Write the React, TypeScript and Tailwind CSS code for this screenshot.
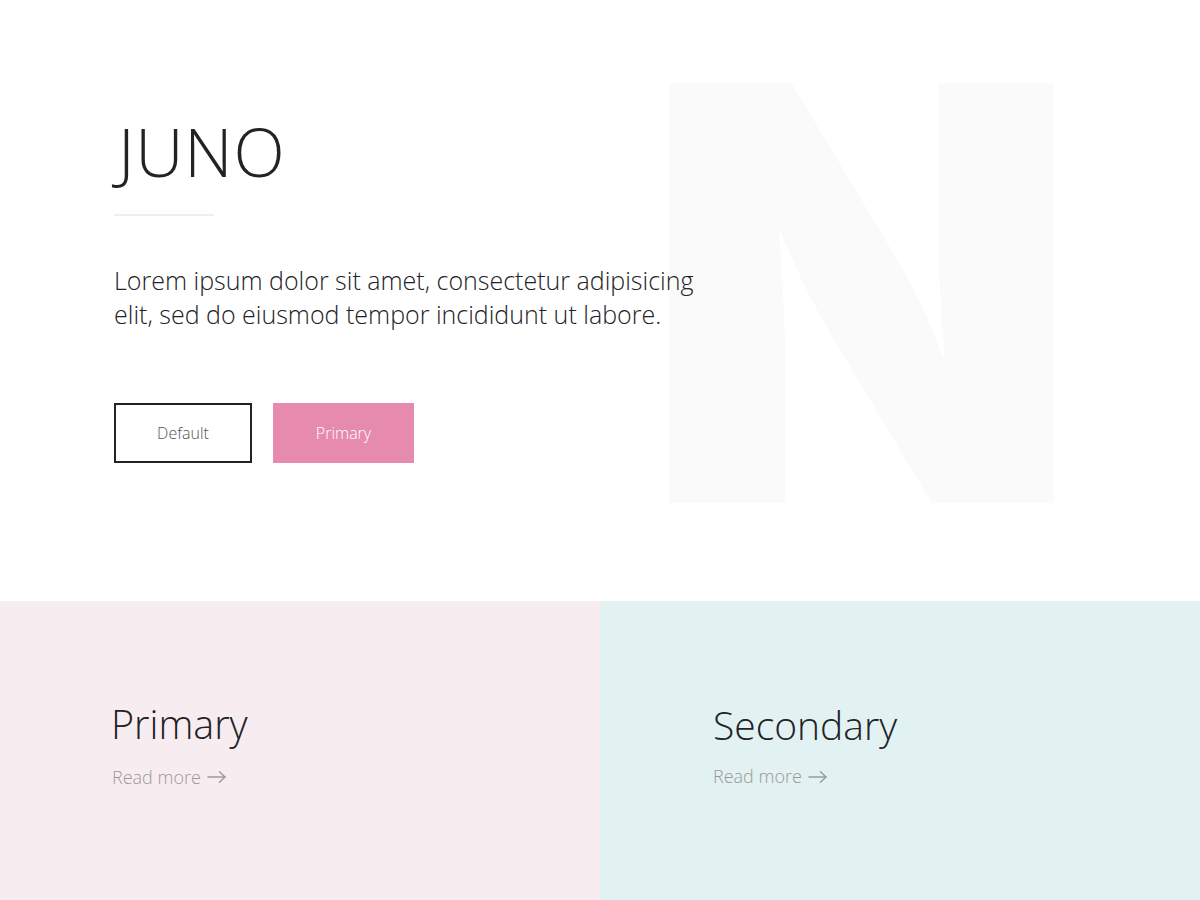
function Arrow() {
  return (
    <svg width="19" height="12" viewBox="0 0 19 12" fill="none" stroke="#9a9a9a" strokeWidth="1.4" strokeLinecap="round" strokeLinejoin="round">
      <path d="M1 6H18" />
      <path d="M12.5 0.8L18 6L12.5 11.2" />
    </svg>
  );
}

export default function App() {
  const font = { fontFamily: '"Open Sans", "Noto Sans", sans-serif' };
  return (
    <div className="w-[1200px] h-[900px] bg-white overflow-hidden" style={font}>
      <section className="relative h-[601px] overflow-hidden">
        <div
          aria-hidden
          className="absolute left-[643px] top-[5px] select-none text-[#fafafa] font-black leading-none origin-left scale-x-[0.985]"
          style={{ fontFamily: 'Inter, sans-serif', fontSize: '577px' }}
        >
          N
        </div>
        <div className="relative pl-[114px] pt-[118px]">
          <h1 className="ml-[4px] text-[67px] leading-none font-light tracking-[0.8px] text-[#222227]">JUNO</h1>
          <div className="mt-[29px] w-[100px] h-[2px] bg-[#eeeeee]" />
          <p className="mt-[47px] text-[25px] leading-[34px] font-light text-[#222227] w-[620px]">
            Lorem ipsum dolor sit amet, consectetur adipisicing elit, sed do eiusmod tempor incididunt ut labore.
          </p>
          <div className="mt-[72px] flex gap-[21px]">
            <button className="w-[138px] h-[60px] border-2 border-[#222227] text-[16px] font-light text-[#555]">
              Default
            </button>
            <button className="w-[141px] h-[60px] bg-[#e68aae] text-[16px] font-light text-white">
              Primary
            </button>
          </div>
        </div>
      </section>
      <section className="grid grid-cols-2 h-[299px]">
        <div className="bg-[#f7edf1] pl-[112px] pt-[104px]">
          <h2 className="-ml-[1px] text-[39.5px] leading-none font-light text-[#222227]">Primary</h2>
          <a className="mt-[19px] flex items-center gap-[6px] text-[18px] font-light text-[#999]">
            Read more <Arrow />
          </a>
        </div>
        <div className="bg-[#e2f1f1] pl-[113px] pt-[104px]">
          <h2 className="text-[39px] leading-none font-light text-[#222227]">Secondary</h2>
          <a className="mt-[19px] flex items-center gap-[6px] text-[18px] font-light text-[#999]">
            Read more <Arrow />
          </a>
        </div>
      </section>
    </div>
  );
}
